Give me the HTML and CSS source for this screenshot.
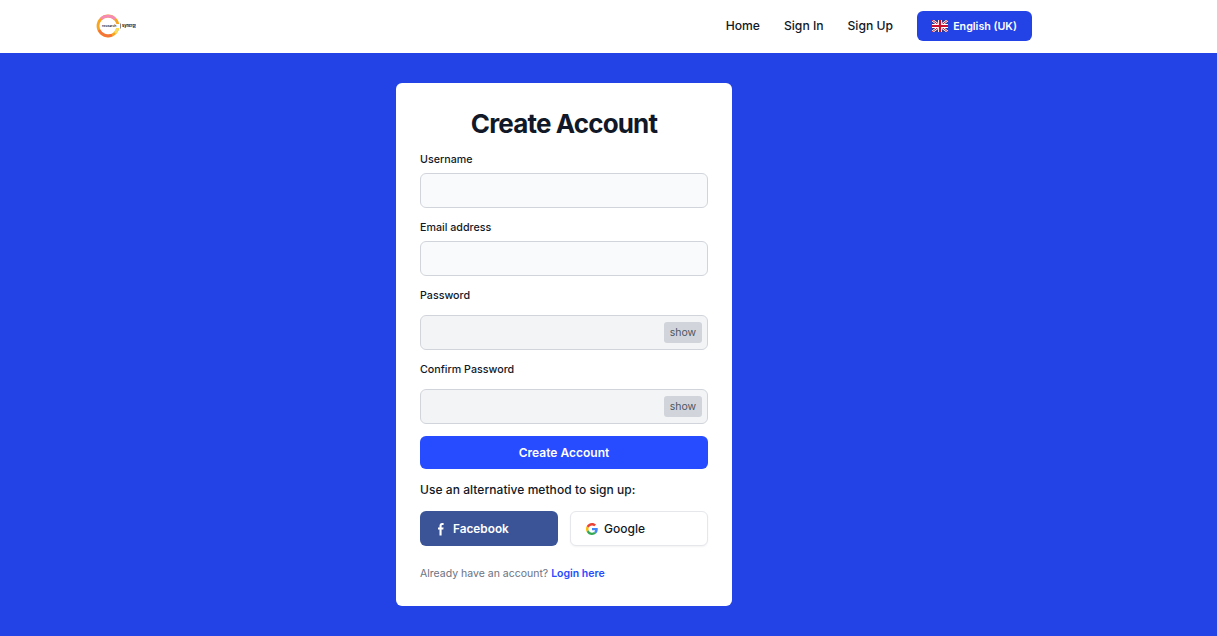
FILE: index.html
```html
<!DOCTYPE html>
<html lang="en">
<head>
<meta charset="utf-8">
<title>Create Account</title>
<link rel="stylesheet" href="styles.css">
</head>
<body>
<div class="shell">
<header class="topbar">
  <div class="topbar-inner">
    <a class="logo" href="#">
      <svg width="40" height="26" viewBox="0 0 40 26">
        <circle cx="12" cy="13" r="10" fill="none" stroke="#f8a51f" stroke-width="2.8"/>
        <path d="M5 6a10 10 0 0 1 14 0" fill="none" stroke="#f58ab8" stroke-width="2.8"/>
        <path d="M3 17a10 10 0 0 0 13 5" fill="none" stroke="#f4743b" stroke-width="2.8"/>
        <path d="M22 13a10 10 0 0 1-3 7" fill="none" stroke="#f9dc5c" stroke-width="2.8"/>
        <rect x="19" y="11" width="5" height="4" fill="#fff"/>
        <text x="6" y="14.400" class="logo-text">research</text>
        <rect x="24.300" y="10.500" width="0.7" height="5" fill="#555"/>
        <text x="26" y="14.400" class="logo-text logo-strong">synergy</text>
      </svg>
    </a>
    <nav class="nav">
      <a href="#">Home</a>
      <a href="#">Sign In</a>
      <a href="#">Sign Up</a>
      <button class="lang" type="button">
        <svg width="16" height="12" viewBox="0 0 16 12">
          <rect width="16" height="12" fill="#2b3a8c"/>
          <path d="M0 0l16 12M16 0L0 12" stroke="#fff" stroke-width="2.4"/>
          <path d="M0 0l16 12M16 0L0 12" stroke="#c8102e" stroke-width="1"/>
          <path d="M8 0v12M0 6h16" stroke="#fff" stroke-width="4"/>
          <path d="M8 0v12M0 6h16" stroke="#c8102e" stroke-width="2.2"/>
        </svg>
        English (UK)
      </button>
    </nav>
  </div>
</header>
<main class="page">
  <form class="card">
    <h1 class="title">Create Account</h1>
    <label class="label">Username</label>
    <input class="input" type="text">
    <label class="label">Email address</label>
    <input class="input" type="email">
    <label class="label label-pw">Password</label>
    <div class="pw">
      <span class="show">show</span>
    </div>
    <label class="label label-pw">Confirm Password</label>
    <div class="pw">
      <span class="show">show</span>
    </div>
    <button class="submit" type="button">Create Account</button>
    <p class="alt">Use an alternative method to sign up:</p>
    <div class="social">
      <button class="btn-fb" type="button">
        <svg width="8" height="14" viewBox="0 0 8 14"><path fill="#fff" d="M2.500 13.500V7.600H1V5.500h1.500V3.900C2.500 2 3.500 1 5.100 1c.7 0 1.300.1 1.500.1v2H5.500c-.7 0-.9.4-.9 1v1.400h2l-.3 2.100H4.600v5.900z"/></svg>
        Facebook
      </button>
      <button class="btn-g" type="button">
        <svg width="12" height="12" viewBox="0 0 48 48">
          <path fill="#EA4335" d="M24 9.500c3.500 0 6.700 1.200 9.200 3.600l6.900-6.900C35.900 2.400 30.500 0 24 0 14.600 0 6.500 5.400 2.600 13.200l8 6.200C12.400 13.700 17.700 9.500 24 9.500z"/>
          <path fill="#4285F4" d="M47 24.500c0-1.600-.1-3.100-.4-4.500H24v9h12.900c-.6 3-2.200 5.500-4.700 7.200l7.700 6C44.400 37.900 47 31.800 47 24.500z"/>
          <path fill="#FBBC05" d="M10.600 28.600c-.5-1.400-.7-3-.7-4.600s.3-3.200.7-4.600l-8-6.200C.9 16.500 0 20.100 0 24s.9 7.500 2.600 10.800l8-6.200z"/>
          <path fill="#34A853" d="M24 48c6.500 0 11.900-2.100 15.900-5.800l-7.700-6c-2.200 1.500-4.900 2.300-8.200 2.300-6.300 0-11.600-4.200-13.400-9.900l-8 6.200C6.500 42.600 14.600 48 24 48z"/>
        </svg>
        Google
      </button>
    </div>
    <p class="foot">Already have an account? <a href="#">Login here</a></p>
  </form>
</main>
</div>
</body>
</html>
```

FILE: styles.css
```css
* { box-sizing: border-box; }
html, body { margin: 0; height: 100%; }
body {
  background: #2443e6;
  font-family: Inter, "Liberation Sans", sans-serif;
  color: #111827;
  overflow: hidden;
}
.topbar { background: #fff; height: 53px; }
.topbar-inner {
  width: 952px;
  height: 100%;
  margin-left: 88px;
  padding: 0 8px 1px;
  display: flex;
  align-items: center;
  justify-content: space-between;
}
.logo { display: flex; width: 40px; height: 26px; }
.logo-text { font-size: 3.400px; font-weight: 600; fill: #333; font-family: Inter, sans-serif; }
.logo-strong { font-size: 3.800px; font-weight: 700; fill: #111; }
.nav { display: flex; align-items: center; gap: 24px; }
.nav a { color: #111827; text-decoration: none; font-size: 12.150px; font-weight: 500; line-height: 20px; }
.lang {
  display: flex;
  align-items: center;
  gap: 5px;
  height: 30px;
  width: 115px;
  justify-content: center;
  background: #2443e6;
  color: #fff;
  border: 0;
  border-radius: 6px;
  font: 600 10.700px Inter, sans-serif;
}
.page { width: 1128px; display: flex; justify-content: center; padding: 30px 0 0; }
.card {
  width: 336px;
  height: 523px;
  background: #fff;
  border-radius: 6px;
  padding: 24px;
  display: flex;
  flex-direction: column;
}
.title {
  margin: 1px 0 0;
  text-align: center;
  font-size: 26px;
  font-weight: 700;
  line-height: 32px;
  letter-spacing: -0.850px;
  color: #111827;
}
.label {
  display: block;
  font-size: 10.700px;
  font-weight: 500;
  line-height: 16px;
  margin: 12px 0 5px;
  color: #111827;
}
.input {
  display: block;
  width: 100%;
  height: 35px;
  background: #f9fafb;
  border: 1px solid #d1d5db;
  border-radius: 6px;
  margin: 0;
}
.label-pw { margin-bottom: 11px; }
.pw {
  height: 35px;
  background: #f3f4f6;
  border: 1px solid #d1d5db;
  border-radius: 6px;
  display: flex;
  align-items: center;
  justify-content: flex-end;
  padding-right: 5px;
}
.show {
  width: 38px;
  height: 21px;
  background: #d1d5db;
  border-radius: 3px;
  color: #4b5563;
  font-size: 10.500px;
  line-height: 21px;
  text-align: center;
}
.submit {
  margin-top: 12px;
  height: 33px;
  background: #274bff;
  color: #fff;
  border: 0;
  border-radius: 6px;
  font: 600 12px Inter, sans-serif;
}
.alt {
  margin: 12px 0 0;
  font-size: 12px;
  font-weight: 500;
  line-height: 18px;
  letter-spacing: 0.050px;
}
.social { display: flex; justify-content: space-between; margin-top: 12px; }
.btn-fb, .btn-g {
  height: 35px;
  border-radius: 6px;
  display: flex;
  align-items: center;
  font: 600 12px Inter, sans-serif;
}
.btn-fb {
  width: 138px;
  background: #3b5498;
  color: #fff;
  border: 0;
  padding: 0 0 0 17px;
  gap: 8px;
  font-size: 11.800px;
}
.btn-g {
  width: 138px;
  background: #fff;
  color: #111827;
  border: 1px solid #e5e7eb;
  box-shadow: 0 1px 2px rgba(0,0,0,.05);
  padding: 0 0 0 15px;
  gap: 6px;
  font-weight: 500;
}
.foot {
  margin: 20px 0 0;
  font-size: 10.500px;
  line-height: 16px;
  color: #6b7280;
}
.foot a { color: #274bff; font-weight: 600; text-decoration: none; }
```
